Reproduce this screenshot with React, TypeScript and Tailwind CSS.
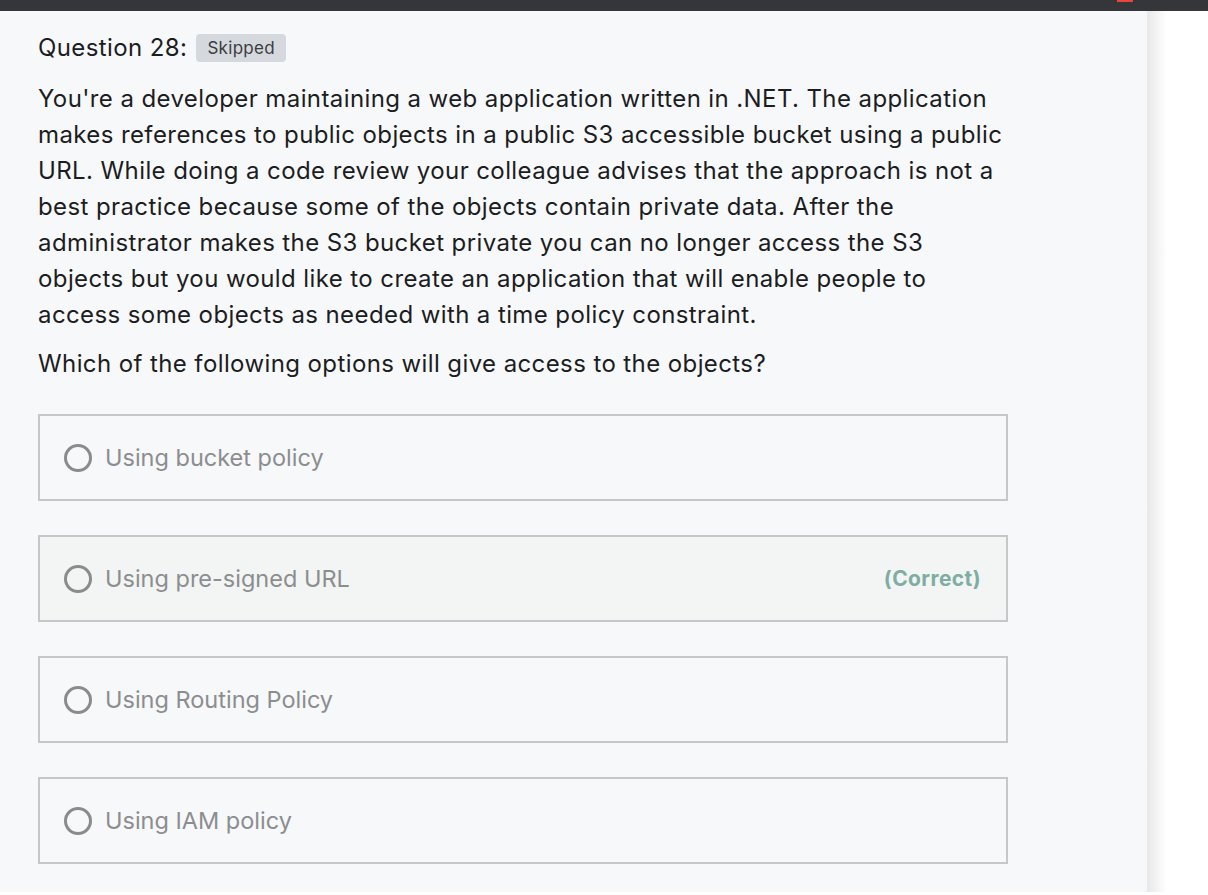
const options = [
    { label: "Using bucket policy", correct: false },
    { label: "Using pre-signed URL", correct: true },
    { label: "Using Routing Policy", correct: false },
    { label: "Using IAM policy", correct: false },
]

export default function App() {
    return (
        <div className="h-[895px] w-[1208px] overflow-hidden bg-white font-['Inter','Liberation_Sans',sans-serif]">
            {/* Top bar */}
            <div className="relative h-[11px] bg-[#35363a]">
                <div className="absolute left-[1117px] top-0 h-[2px] w-[16px] bg-[#e8453c]" />
            </div>

            <div className="flex h-[881px]">
                {/* Question panel */}
                <div className="w-[1147px] shrink-0 bg-[#f7f8fa] pl-[38px] pt-[19px]">
                    <div className="flex h-[36px] items-center gap-[9px]">
                        <h2 className="text-[24px] leading-[36px] tracking-[0.4px] text-[#1c1d1f]">Question 28:</h2>
                        <span className="rounded-[4px] bg-[#d5d9de] px-[11px] text-[17px] leading-[28px] tracking-[0.3px] text-[#3b3c3e]">Skipped</span>
                    </div>

                    <p className="mt-[15px] w-[972px] text-[24px] leading-[36px] tracking-[0.4px] text-[#1c1d1f]">
                        You're a developer maintaining a web application written in .NET. The application makes references to public objects in a public S3 accessible bucket using a public URL. While doing a code review your colleague advises that the approach is not a best practice because some of the objects contain private data. After the administrator makes the S3 bucket private you can no longer access the S3 objects but you would like to create an application that will enable people to access some objects as needed with a time policy constraint.
                    </p>
                    <p className="mt-[13px] text-[24px] leading-[36px] tracking-[0.4px] text-[#1c1d1f]">
                        Which of the following options will give access to the objects?
                    </p>

                    {/* Options */}
                    <div className="mt-[32px] flex w-[970px] flex-col gap-[34px]">
                        {options.map((opt) => (
                            <div
                                key={opt.label}
                                className={`flex h-[87px] items-center border-2 border-[#c6c7c8] pl-[24px] pr-[25px] ${opt.correct ? "bg-[#f2f5f4]" : "bg-[#f7f8fa]"}`}
                            >
                                <span className="h-[28px] w-[28px] shrink-0 rounded-full border-[3px] border-[#8a8b8c]" />
                                <span className="ml-[13px] flex-1 text-[23.5px] text-[#8c8d8f]">{opt.label}</span>
                                {opt.correct && (
                                    <span className="text-[21px] font-bold tracking-[0.4px] text-[#80ada2]">(Correct)</span>
                                )}
                            </div>
                        ))}
                    </div>
                </div>

                {/* Side shadow */}
                <div className="flex flex-1">
                    <div className="w-[20px] bg-gradient-to-r from-[#e8e8e8] to-white" />
                    <div className="flex-1 bg-white" />
                </div>
            </div>
        </div>
    )
}
